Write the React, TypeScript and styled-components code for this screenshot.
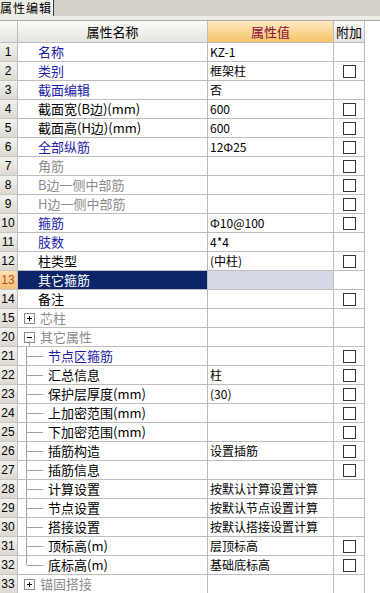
import React from "react";
import styled, { createGlobalStyle } from "styled-components";

type Tone = "blue" | "black" | "gray";
type Tree = "none" | "plus" | "minus" | "child" | "last";

interface Row {
    no: number;
    name: string;
    value?: string;
    tone: Tone;
    check?: boolean;
    tree?: Tree;
    selected?: boolean;
}

const RB = "Ф";

const rows: Row[] = [
    { no: 1, name: "名称", value: "KZ-1", tone: "blue" },
    { no: 2, name: "类别", value: "框架柱", tone: "blue", check: true },
    { no: 3, name: "截面编辑", value: "否", tone: "blue" },
    { no: 4, name: "截面宽(B边)(mm)", value: "600", tone: "black", check: true },
    { no: 5, name: "截面高(H边)(mm)", value: "600", tone: "black", check: true },
    { no: 6, name: "全部纵筋", value: `12${RB}25`, tone: "blue", check: true },
    { no: 7, name: "角筋", tone: "gray", check: true },
    { no: 8, name: "B边一侧中部筋", tone: "gray", check: true },
    { no: 9, name: "H边一侧中部筋", tone: "gray", check: true },
    { no: 10, name: "箍筋", value: `${RB}10@100`, tone: "blue", check: true },
    { no: 11, name: "肢数", value: "4*4", tone: "blue" },
    { no: 12, name: "柱类型", value: "(中柱)", tone: "black", check: true },
    { no: 13, name: "其它箍筋", tone: "black", selected: true },
    { no: 14, name: "备注", tone: "black", check: true },
    { no: 15, name: "芯柱", tone: "gray", tree: "plus" },
    { no: 20, name: "其它属性", tone: "gray", tree: "minus" },
    { no: 21, name: "节点区箍筋", tone: "blue", check: true, tree: "child" },
    { no: 22, name: "汇总信息", value: "柱", tone: "black", check: true, tree: "child" },
    { no: 23, name: "保护层厚度(mm)", value: "(30)", tone: "black", check: true, tree: "child" },
    { no: 24, name: "上加密范围(mm)", tone: "black", check: true, tree: "child" },
    { no: 25, name: "下加密范围(mm)", tone: "black", check: true, tree: "child" },
    { no: 26, name: "插筋构造", value: "设置插筋", tone: "black", check: true, tree: "child" },
    { no: 27, name: "插筋信息", tone: "black", check: true, tree: "child" },
    { no: 28, name: "计算设置", value: "按默认计算设置计算", tone: "black", tree: "child" },
    { no: 29, name: "节点设置", value: "按默认节点设置计算", tone: "black", tree: "child" },
    { no: 30, name: "搭接设置", value: "按默认搭接设置计算", tone: "black", tree: "child" },
    { no: 31, name: "顶标高(m)", value: "层顶标高", tone: "black", check: true, tree: "child" },
    { no: 32, name: "底标高(m)", value: "基础底标高", tone: "black", check: true, tree: "last" },
    { no: 33, name: "锚固搭接", tone: "gray", tree: "plus" },
];

const toneColor: Record<Tone, string> = {
    blue: "#1c1caa",
    black: "#000000",
    gray: "#8c8c8c",
};

const GlobalStyle = createGlobalStyle`
    html, body {
        margin: 0;
        padding: 0;
        background: #ffffff;
    }
    body {
        font-family: "Noto Sans CJK SC", "DejaVu Sans", sans-serif;
        font-size: 12px;
    }
`;

const Panel = styled.div`
    width: 380px;
    height: 593px;
    overflow: hidden;
    background: #ffffff;
`;

const TabStrip = styled.div`
    height: 16px;
    display: flex;
    background: #d4d0c8;
`;

const Tab = styled.div`
    width: 53px;
    background: #ecebe6;
    border-right: 1px solid #404040;
    box-shadow: inset -1px 0 0 #ffffff;
    font-size: 12px;
    letter-spacing: 1px;
    line-height: 16px;
    color: #000;
    white-space: nowrap;
`;

const TabFloor = styled.div`
    height: 4px;
    background: #ecebe6;
    border-bottom: 1px solid #a8a8a8;
`;

const Line = styled.div<{ $height: number }>`
    display: grid;
    grid-template-columns: 18px 190px 126px 31px;
    height: ${(p) => p.$height}px;
`;

const Cell = styled.div`
    border-right: 1px solid #bdbdbd;
    border-bottom: 1px solid #bdbdbd;
    box-sizing: border-box;
    display: flex;
    align-items: center;
    overflow: hidden;
    white-space: nowrap;
    line-height: 18px;
`;

const HeadCell = styled(Cell)<{ $kind?: "plain" | "value" }>`
    justify-content: center;
    font-size: 13px;
    color: ${(p) => (p.$kind === "value" ? "#8a0f3c" : "#000")};
    background: ${(p) =>
        p.$kind === "value"
            ? "linear-gradient(#fdeac0, #f6c267)"
            : "linear-gradient(#fbfbfa, #e6e4df)"};
`;

const NumCell = styled(Cell)<{ $active?: boolean }>`
    justify-content: center;
    padding-right: 1px;
    color: ${(p) => (p.$active ? "#c44b12" : "#000")};
    background: ${(p) =>
        p.$active
            ? "linear-gradient(#fde1b4, #f8c07a)"
            : "linear-gradient(#f3f2ee, #dcd9d1)"};
    border-bottom-color: #c8c6c0;
    font-family: "Liberation Sans", "DejaVu Sans", sans-serif;
    font-size: 12px;
`;

const NameCell = styled(Cell)<{ $tone: Tone; $selected?: boolean }>`
    color: ${(p) => (p.$selected ? "#fff" : toneColor[p.$tone])};
    background: ${(p) => (p.$selected ? "#0c246a" : "#fff")};
    padding-left: 3px;
    font-size: 13px;
    align-items: stretch;
`;

const NameText = styled.span<{ $inset: number }>`
    display: flex;
    align-items: center;
    padding-left: ${(p) => p.$inset}px;
`;

const ValueCell = styled(Cell)<{ $selected?: boolean }>`
    background: ${(p) => (p.$selected ? "#d6dae6" : "#fff")};
    padding-left: 2px;
    font-size: 12px;
`;

const CheckCell = styled(Cell)`
    justify-content: center;
    padding-left: 1px;
`;

const CheckBox = styled.span`
    width: 11px;
    height: 11px;
    border: 1px solid #2c3a48;
    background: #fff;
`;

const Toggle = styled.span`
    align-self: center;
    width: 9px;
    height: 9px;
    margin-left: 3px;
    border: 1px solid #8c8c8c;
    background: #fff;
    position: relative;
    flex: none;

    &::before,
    &::after {
        content: "";
        position: absolute;
        background: #000;
    }
    &::before {
        left: 2px;
        right: 2px;
        top: 4px;
        height: 1px;
    }
`;

const PlusToggle = styled(Toggle)`
    &::after {
        top: 2px;
        bottom: 2px;
        left: 4px;
        width: 1px;
    }
`;

const Guide = styled.span<{ $last?: boolean }>`
    position: relative;
    width: 21px;
    margin-left: 5px;
    flex: none;
    border-left: 1px solid #a0a0a0;
    height: ${(p) => (p.$last ? "9px" : "19px")};
    margin-bottom: ${(p) => (p.$last ? "auto" : "-1px")};

    &::after {
        content: "";
        position: absolute;
        left: 0;
        width: 16px;
        top: 9px;
        height: 1px;
        background: #a0a0a0;
    }
`;

const Stem = styled.span`
    position: absolute;
    left: 8px;
    top: 13px;
    width: 1px;
    height: 7px;
    background: #a0a0a0;
`;

const StemHost = styled.span`
    position: relative;
    display: flex;
    align-items: stretch;
`;

function TreeLead({ tree }: { tree: Tree }) {
    if (tree === "plus") return <PlusToggle />;
    if (tree === "minus")
        return (
            <StemHost>
                <Toggle />
                <Stem />
            </StemHost>
        );
    if (tree === "child" || tree === "last") return <Guide $last={tree === "last"} />;
    return null;
}

function PropRow({ row }: { row: Row }) {
    const tree = row.tree ?? "none";
    const inset = tree === "none" ? 17 : tree === "plus" || tree === "minus" ? 5 : 0;
    return (
        <Line $height={19}>
            <NumCell $active={row.selected}>{row.no}</NumCell>
            <NameCell $tone={row.tone} $selected={row.selected}>
                <TreeLead tree={tree} />
                <NameText $inset={inset}>{row.name}</NameText>
            </NameCell>
            <ValueCell $selected={row.selected}>{row.value}</ValueCell>
            <CheckCell>{row.check && <CheckBox />}</CheckCell>
        </Line>
    );
}

export default function App() {
    return (
        <Panel>
            <GlobalStyle />
            <TabStrip>
                <Tab>属性编辑</Tab>
            </TabStrip>
            <TabFloor />
            <Line $height={22}>
                <HeadCell />
                <HeadCell>属性名称</HeadCell>
                <HeadCell $kind="value">属性值</HeadCell>
                <HeadCell>附加</HeadCell>
            </Line>
            {rows.map((r) => (
                <PropRow key={r.no} row={r} />
            ))}
        </Panel>
    );
}
